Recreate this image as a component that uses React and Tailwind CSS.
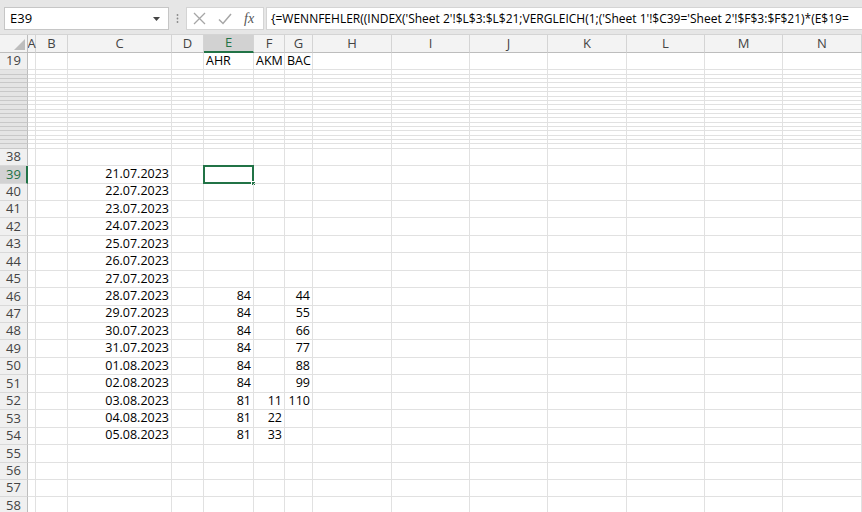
import React from 'react';

const cols = [
  { k: 'A', w: 'w-[8px]' },
  { k: 'B', w: 'w-[32px]' },
  { k: 'C', w: 'w-[104px]' },
  { k: 'D', w: 'w-[32px]' },
  { k: 'E', w: 'w-[50px]' },
  { k: 'F', w: 'w-[31px]' },
  { k: 'G', w: 'w-[28px]' },
  { k: 'H', w: 'w-[79px]' },
  { k: 'I', w: 'w-[78px]' },
  { k: 'J', w: 'w-[78px]' },
  { k: 'K', w: 'w-[79px]' },
  { k: 'L', w: 'w-[78px]' },
  { k: 'M', w: 'w-[78px]' },
  { k: 'N', w: 'w-[79px]' },
];

const data = {
  19: { E: 'AHR', F: 'AKM', G: 'BAC' },
  39: { C: '21.07.2023' },
  40: { C: '22.07.2023' },
  41: { C: '23.07.2023' },
  42: { C: '24.07.2023' },
  43: { C: '25.07.2023' },
  44: { C: '26.07.2023' },
  45: { C: '27.07.2023' },
  46: { C: '28.07.2023', E: '84', G: '44' },
  47: { C: '29.07.2023', E: '84', G: '55' },
  48: { C: '30.07.2023', E: '84', G: '66' },
  49: { C: '31.07.2023', E: '84', G: '77' },
  50: { C: '01.08.2023', E: '84', G: '88' },
  51: { C: '02.08.2023', E: '84', G: '99' },
  52: { C: '03.08.2023', E: '81', F: '11', G: '110' },
  53: { C: '04.08.2023', E: '81', F: '22' },
  54: { C: '05.08.2023', E: '81', F: '33' },
};

const formula =
  "{=WENNFEHLER((INDEX('Sheet 2'!$L$3:$L$21;VERGLEICH(1;('Sheet 1'!$C39='Sheet 2'!$F$3:$F$21)*(E$19=";

function Row({ n }) {
  const vals = data[n] || {};
  const isSel = n === 39;
  return (
    <div className="flex h-[17.45px]">
      <div
        className={
          'w-[28px] shrink-0 pl-[6px] flex items-center text-[13px] border-b border-[#d9d9d9] ' +
          (isSel
            ? 'bg-[#d2d2d2] text-[#217346] border-r-2 border-r-[#217346]'
            : 'bg-[#f0f0f0] text-[#444] border-r border-r-[#bdbdbd]')
        }
      >
        {n}
      </div>
      {cols.map((c) => {
        const v = vals[c.k];
        const header = n === 19;
        return (
          <div
            key={c.k}
            className={
              c.w +
              ' shrink-0 relative flex items-center border-r border-b border-[#e1e1e1] ' +
              (header ? 'justify-start pl-[2px]' : 'justify-end pr-[2px]')
            }
          >
            {v}
            {isSel && c.k === 'E' && (
              <div className="absolute left-[-1px] top-[-1px] right-[-1px] bottom-[-1px] border-2 border-[#217346]">
                <div className="absolute right-[-4px] bottom-[-4px] w-[5px] h-[5px] bg-[#217346] border border-white" />
              </div>
            )}
          </div>
        );
      })}
    </div>
  );
}

export default function App() {
  const hidden = Array.from({ length: 18 }, (_, i) => i + 20);
  const visible = Array.from({ length: 21 }, (_, i) => i + 38);

  return (
    <div
      className="w-[862px] h-[512px] overflow-hidden bg-white text-[12.5px] text-black"
      style={{ fontFamily: '"Open Sans", "Noto Sans", sans-serif' }}
    >
      {/* formula bar */}
      <div className="h-[35px] bg-[#e6e6e6] flex items-start pt-[7px] pl-[4px] border-b border-[#d4d4d4]">
        <div className="w-[165px] h-[23px] bg-white border border-[#c6c6c6] flex items-center pl-[5px] pr-[8px] text-[13px]">
          <span className="flex-1">E39</span>
          <svg width="7" height="4" viewBox="0 0 7 4">
            <path d="M0 0 L7 0 L3.5 4 Z" fill="#444" />
          </svg>
        </div>
        <div className="w-[17px] h-[23px] flex items-center justify-center">
          <svg width="3" height="9" viewBox="0 0 3 9">
            <circle cx="1.5" cy="1" r="0.9" fill="#888" />
            <circle cx="1.5" cy="4.5" r="0.9" fill="#888" />
            <circle cx="1.5" cy="8" r="0.9" fill="#888" />
          </svg>
        </div>
        <div className="w-[78px] h-[23px] bg-white border border-[#d4d4d4] flex items-center pl-[6px] gap-[12px]">
          <svg width="13" height="13" viewBox="0 0 13 13">
            <path d="M1 1 L12 12 M12 1 L1 12" stroke="#a6a6a6" strokeWidth="1.3" />
          </svg>
          <svg width="14" height="12" viewBox="0 0 14 12">
            <path d="M1 6.5 L5 10.5 L13 1" stroke="#a6a6a6" strokeWidth="1.5" fill="none" />
          </svg>
          <span
            className="text-[14px] italic text-[#555] leading-none"
            style={{ fontFamily: '"Liberation Serif", serif' }}
          >
            fx
          </span>
        </div>
        <div className="ml-[2px] flex-1 h-[23px] bg-white border border-[#d4d4d4] border-r-0 flex items-center pl-[4px] text-[12px] whitespace-nowrap overflow-hidden">
          {formula}
        </div>
      </div>

      {/* column headers */}
      <div className="flex h-[18px] bg-[#f3f3f3] text-[13px]">
        <div className="w-[28px] shrink-0 relative border-r border-b border-[#bdbdbd]">
          <svg className="absolute right-[2px] bottom-[2px]" width="11" height="11" viewBox="0 0 11 11">
            <path d="M11 0 L11 11 L0 11 Z" fill="#bdbdbd" />
          </svg>
        </div>
        {cols.map((c) => (
          <div
            key={c.k}
            className={
              c.w +
              ' shrink-0 flex items-center justify-center border-r border-r-[#d4d4d4] ' +
              (c.k === 'E'
                ? 'bg-[#d2d2d2] text-[#217346] border-b-2 border-b-[#217346]'
                : 'text-[#444] border-b border-b-[#bdbdbd]')
            }
          >
            {c.k}
          </div>
        ))}
      </div>

      <Row n={19} />

      {hidden.map((n) => (
        <div key={n} className="flex h-[4.35px]">
          <div className="w-[28px] shrink-0 bg-[#e4e4e4] border-r border-r-[#bdbdbd] border-b border-b-[#c8c8c8]" />
          {cols.map((c) => (
            <div key={c.k} className={c.w + ' shrink-0 border-r border-b border-[#e1e1e1]'} />
          ))}
        </div>
      ))}

      {visible.map((n) => (
        <Row key={n} n={n} />
      ))}
    </div>
  );
}
